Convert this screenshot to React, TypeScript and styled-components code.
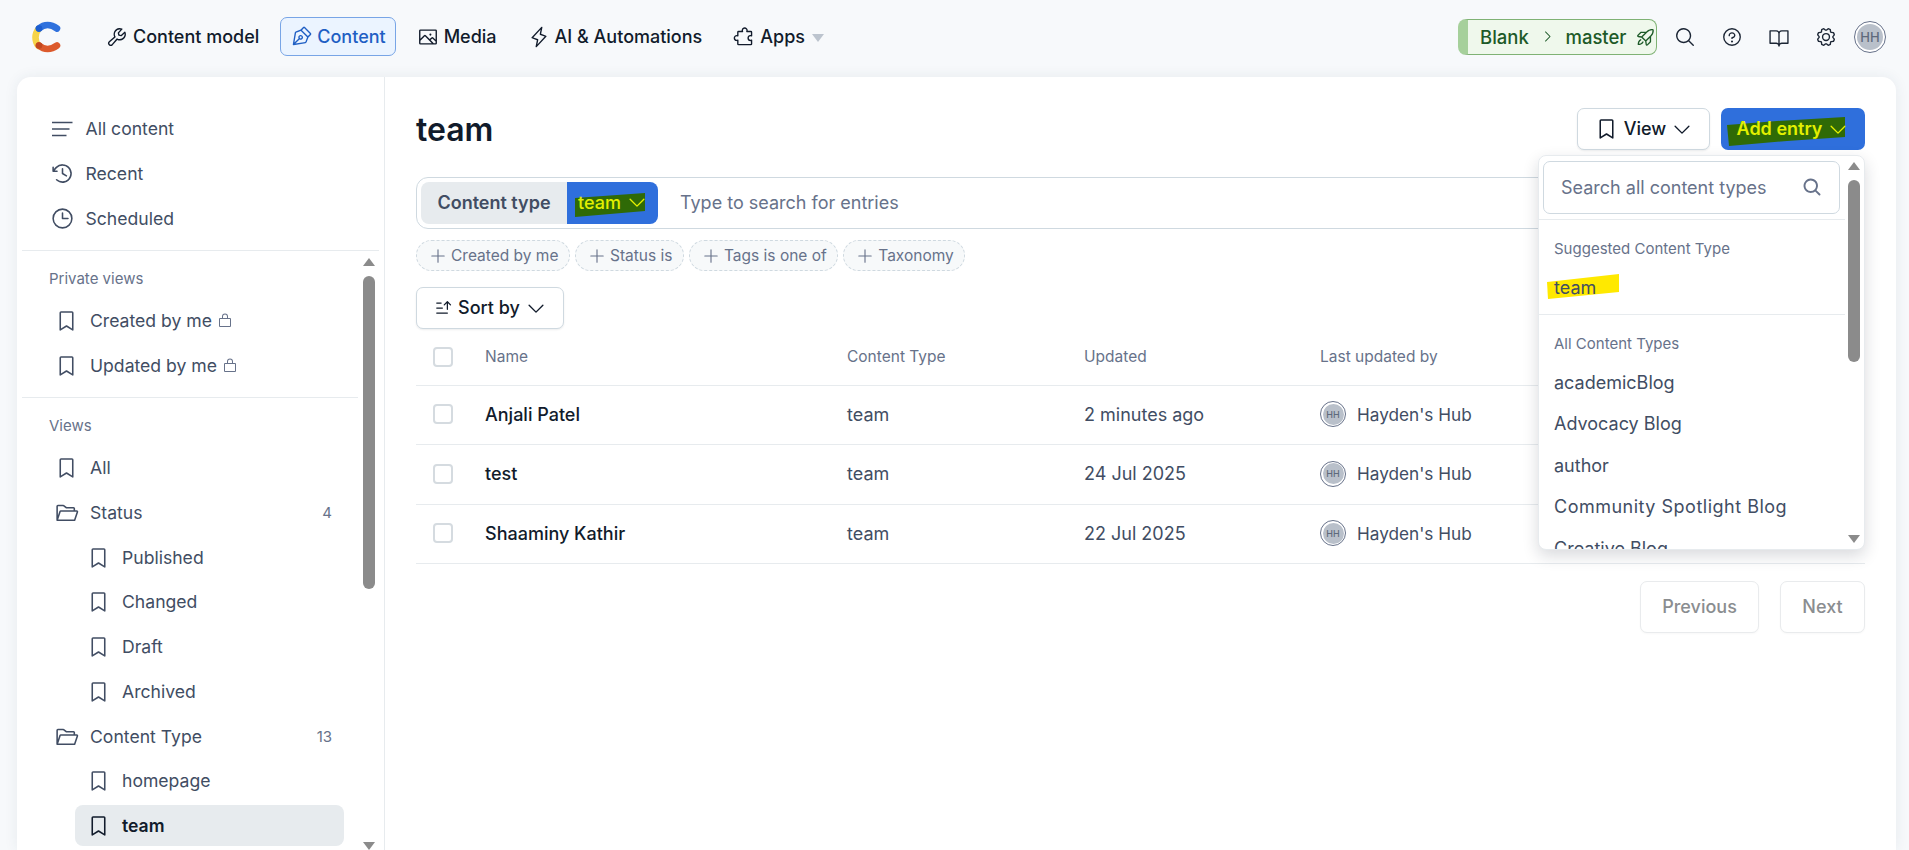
import * as React from 'react';
import styled, { createGlobalStyle } from 'styled-components';
import {
  PiBookmarkSimple, PiBookOpen, PiCaretDown, PiCaretRight, PiClock, PiClockCounterClockwise, PiFolderOpen,
  PiGear, PiImage, PiLightning, PiLockSimple, PiMagnifyingGlass, PiMagnifyingGlassBold, PiPenNib, PiPlus,
  PiPuzzlePiece, PiQuestion, PiRocketLaunch, PiSortDescending, PiWrench,
} from 'react-icons/pi';

const GlobalStyle = createGlobalStyle`
  * { box-sizing: border-box; }
  html, body { margin: 0; height: 100%; overflow: hidden; }
  body {
    font-family: Inter, 'Liberation Sans', sans-serif;
    font-size: 18px;
    color: #111b2b;
    background: #f7f9fb;
  }
  #root { height: 100%; }
`;

const Page = styled.div`
  height: 100%;
  display: flex;
  flex-direction: column;
`;

/* top bar */
const TopBar = styled.header`
  height: 77px;
  flex: none;
  display: flex;
  align-items: center;
  padding: 0 23px 4px 31px;
`;

const Logo = styled.svg`
  width: 32px;
  height: 34px;
  flex: none;
  margin-right: 33px;
`;

const MainNav = styled.nav`
  display: flex;
  align-items: center;
  gap: 11px;
`;

const NavLink = styled.a<{ $active?: boolean }>`
  height: 39px;
  display: flex;
  align-items: center;
  gap: 5px;
  padding: 0 9px;
  border-radius: 7px;
  font-weight: 500;
  white-space: nowrap;
  color: ${p => (p.$active ? '#1f5fc4' : '#111b2b')};
  background: ${p => (p.$active ? '#ebf4ff' : 'transparent')};
  border: 1px solid ${p => (p.$active ? '#78a5e6' : 'transparent')};
`;

const AppsCaret = styled.span`
  width: 0;
  height: 0;
  margin-left: 2px;
  margin-top: 3px;
  border-left: 6px solid transparent;
  border-right: 6px solid transparent;
  border-top: 8px solid #bcc4ce;
`;

const RightGroup = styled.div`
  margin-left: auto;
  display: flex;
  align-items: center;
  gap: 5px;
`;

const EnvPill = styled.div`
  width: 199px;
  height: 36px;
  display: flex;
  align-items: center;
  gap: 11px;
  margin-right: -1px;
  padding-left: 12px;
  border: 1px solid #7fb274;
  border-left: 10px solid #a6d09b;
  border-radius: 8px;
  background: #eff8ec;
  color: #1d5a28;
  font-size: 18.5px;
  font-weight: 500;
`;

const EnvRocket = styled(PiRocketLaunch)`
  margin-left: -3px;
`;

const TopIcons = styled.div`
  display: flex;
`;

const TopIcon = styled.span`
  width: 47px;
  display: flex;
  justify-content: center;
  color: #1c2635;
`;

const Avatar = styled.span<{ $size: number }>`
  width: ${p => p.$size}px;
  height: ${p => p.$size}px;
  flex: none;
  display: flex;
  padding: ${p => (p.$size > 30 ? 2 : 1.5)}px;
  background: #fff;
  border: 1px solid #67728a;
  border-radius: 50%;
`;

const AvatarFace = styled.span<{ $small?: boolean }>`
  flex: 1;
  display: flex;
  align-items: center;
  justify-content: center;
  border-radius: 50%;
  background: #b9c0ca;
  color: #5f6a7c;
  font-size: ${p => (p.$small ? 9 : 13)}px;
  font-weight: 500;
`;

/* panel */
const Panel = styled.div`
  flex: 1;
  min-height: 0;
  margin: 0 13px 0 17px;
  display: flex;
  background: #fff;
  border-radius: 14px 14px 0 0;
  box-shadow: 0 0 14px rgba(40, 60, 90, 0.08);
  overflow: hidden;
`;

const Sidebar = styled.aside`
  width: 368px;
  flex: none;
  display: flex;
  flex-direction: column;
  border-right: 1px solid #e7ebee;
  padding-top: 29.6px;
  font-size: 17.6px;
  color: #414d63;
`;

const SideTop = styled.div`
  padding-bottom: 9px;
  margin: 0 5px;
  border-bottom: 1px solid #e7ebee;
`;

const SideScroll = styled.div`
  position: relative;
  flex: 1;
  min-height: 0;
  overflow: hidden;
`;

const SideSection = styled.section<{ $divider?: boolean }>`
  margin: 0 26px 0 5px;
  padding: 18.5px 0 8.6px;
  border-bottom: ${p => (p.$divider ? '1px solid #e7ebee' : 'none')};
`;

const SideLabel = styled.div`
  height: 20px;
  line-height: 20px;
  margin: 0 0 9.1px 27px;
  font-size: 15px;
  color: #67728a;
`;

const SideItem = styled.a<{ $level: 0 | 1 | 2; $active?: boolean }>`
  height: 44.75px;
  display: flex;
  align-items: center;
  gap: 11px;
  padding: 0 12px 0 11px;
  margin-left: ${p => [16.5, 21, 53][p.$level]}px;
  margin-right: 14px;
  position: relative;
  isolation: isolate;
  font-weight: ${p => (p.$active ? 600 : 400)};
  color: ${p => (p.$active ? '#111b2b' : '#414d63')};
  &::before {
    content: '';
    display: ${p => (p.$active ? 'block' : 'none')};
    position: absolute;
    z-index: -1;
    inset: 1.5px 0;
    border-radius: 8px;
    background: #e7ebee;
  }
`;

const SideIcon = styled.span`
  width: 25px;
  flex: none;
  display: flex;
  justify-content: center;
`;

const LinesIcon = styled.svg`
  width: 21px;
  height: 16px;
`;

const LockIcon = styled(PiLockSimple)`
  margin-left: -6px;
  color: #67728a;
`;

const Count = styled.span`
  margin-left: auto;
  font-size: 15px;
  color: #67728a;
`;

/* scrollbars drawn over the lists */
const ScrollTrack = styled.div<{ $top: number; $right: number; $bottom: number }>`
  position: absolute;
  top: ${p => p.$top}px;
  right: ${p => p.$right}px;
  bottom: ${p => p.$bottom}px;
  width: 12px;
  display: flex;
  flex-direction: column;
`;

const ArrowUp = styled.span`
  width: 0;
  height: 0;
  flex: none;
  border-left: 6px solid transparent;
  border-right: 6px solid transparent;
  border-bottom: 8px solid #8b8b8b;
`;

const ArrowDown = styled(ArrowUp)`
  margin-top: auto;
  border-bottom: none;
  border-top: 8px solid #8b8b8b;
`;

const Thumb = styled.span<{ $height: number }>`
  height: ${p => p.$height}px;
  flex: none;
  margin-top: 10px;
  border-radius: 6px;
  background: #8b8b8b;
`;

/* main column */
const Main = styled.main`
  position: relative;
  flex: 1;
  min-width: 0;
  display: flex;
  flex-direction: column;
  padding: 31px 31px 0 31px;
`;

const TitleRow = styled.div`
  display: flex;
  align-items: center;
  height: 42px;
`;

const Title = styled.h1`
  margin: 0;
  font-size: 32px;
  font-weight: 600;
  color: #111b2b;
`;

const TitleActions = styled.div`
  margin-left: auto;
  display: flex;
  gap: 11px;
`;

const OutlineButton = styled.button<{ $width: number }>`
  width: ${p => p.$width}px;
  height: 42px;
  display: flex;
  align-items: center;
  justify-content: center;
  gap: 5px;
  padding: 0 0 1px;
  font: inherit;
  font-weight: 500;
  color: #111b2b;
  background: #fff;
  border: 1px solid #cfd9e0;
  border-radius: 7px;
  box-shadow: 0 1px 2px rgba(17, 27, 43, 0.08);
`;

const AddButton = styled.button`
  position: relative;
  width: 144px;
  height: 42px;
  display: flex;
  align-items: center;
  justify-content: center;
  padding: 0 0 1px;
  font: inherit;
  font-weight: 600;
  color: #e3f000;
  background: #2f6fdc;
  border: none;
  border-radius: 7px;
`;

const Marker = styled.svg<{ $x: number; $y: number; $w: number; $h: number }>`
  position: absolute;
  left: ${p => p.$x}px;
  top: ${p => p.$y}px;
  width: ${p => p.$w}px;
  height: ${p => p.$h}px;
`;

const OverMarker = styled.span`
  position: relative;
  display: flex;
  align-items: center;
  gap: 5px;
`;

const SearchBar = styled.div`
  margin-top: 27px;
  height: 52px;
  flex: none;
  display: flex;
  align-items: center;
  padding: 0 4px;
  border: 1px solid #cfd9e0;
  border-radius: 12px;
`;

const FilterName = styled.span`
  height: 42px;
  width: 146px;
  display: flex;
  align-items: center;
  justify-content: center;
  padding-bottom: 1.5px;
  font-weight: 600;
  color: #414d63;
  background: #e7ebee;
  border-radius: 8px 0 0 8px;
`;

const FilterValue = styled.span`
  position: relative;
  height: 42px;
  width: 91px;
  display: flex;
  align-items: center;
  padding: 0 0 1.5px 11px;
  font-weight: 500;
  color: #e3f000;
  background: #2f6fdc;
  border-radius: 0 8px 8px 0;
`;

const SearchHint = styled.span`
  margin-left: 22px;
  padding-bottom: 1.5px;
  color: #67728a;
`;

const PillRow = styled.div`
  margin-top: 11px;
  display: flex;
  gap: 5px;
`;

const Pill = styled.span`
  height: 31px;
  display: flex;
  align-items: center;
  gap: 4px;
  padding: 0 10.5px 0 12px;
  font-size: 15.5px;
  color: #67728a;
  background: #f7f9fa;
  border: 1px dashed #cfd9e0;
  border-radius: 16px;
`;

const SortRow = styled.div`
  margin-top: 16px;
  display: flex;
`;

const TableRow = styled.div<{ $head?: boolean }>`
  height: ${p => (p.$head ? 56.5 : 59.6)}px;
  flex: none;
  display: grid;
  grid-template-columns: 69px 362px 237px 236px 1fr;
  align-items: center;
  padding-bottom: ${p => (p.$head ? 0 : 1)}px;
  border-bottom: 1px solid #e7ebee;
  font-size: ${p => (p.$head ? 15.5 : 18)}px;
  color: ${p => (p.$head ? '#67728a' : '#414d63')};
`;

const Check = styled.span`
  width: 20px;
  height: 20px;
  margin-left: 17px;
  border: 2px solid #d5dbe0;
  border-radius: 4px;
  background: #fff;
`;

const EntryName = styled.span`
  font-weight: 500;
  color: #111b2b;
`;

const Person = styled.span`
  display: flex;
  align-items: center;
  gap: 11px;
  font-size: 17.2px;
`;

const Pager = styled.div`
  margin-top: 17px;
  display: flex;
  justify-content: flex-end;
  gap: 21px;
`;

const PagerButton = styled.button<{ $width: number }>`
  width: ${p => p.$width}px;
  height: 52px;
  padding: 0 0 1px;
  font: inherit;
  font-weight: 500;
  color: #8a8d90;
  background: #fff;
  border: 1px solid #e9ebed;
  border-radius: 7px;
  box-shadow: 0 1px 2px rgba(17, 27, 43, 0.03);
`;

/* add entry menu */
const Menu = styled.div`
  position: absolute;
  top: 78px;
  right: 31px;
  width: 327px;
  height: 395px;
  overflow: hidden;
  background: #fff;
  border: 1px solid #e7ebee;
  border-radius: 8px;
  box-shadow: 0 6px 16px rgba(17, 27, 43, 0.16);
`;

const MenuSearch = styled.div`
  height: 53px;
  width: 297px;
  margin: 5px 0 0 4px;
  display: flex;
  align-items: center;
  justify-content: space-between;
  padding: 0 17px 1px;
  color: #67728a;
  border: 1px solid #cfd9e0;
  border-radius: 7px;
`;

const MenuDivider = styled.div`
  width: 306px;
  height: 1px;
  margin-top: 5px;
  background: #e7ebee;
`;

const MenuLabel = styled.div`
  margin: 0 0 8px 15px;
  height: 20px;
  line-height: 20px;
  font-size: 15px;
  color: #67728a;
`;

const MenuGroup = styled.div`
  padding-top: 19px;
`;

const MenuItem = styled.div<{ $tracking?: number }>`
  position: relative;
  height: 41.5px;
  display: flex;
  align-items: center;
  padding-left: 15px;
  color: #414d63;
  white-space: nowrap;
  letter-spacing: ${p => p.$tracking ?? 0}px;
`;

const LogoMark = () => (
  <Logo viewBox="0 0 32 34" aria-hidden>
    <g fill="none" strokeWidth="6.6" strokeLinecap="round">
      <path d="M7.5 9C3.5 14 3.5 21 7.5 26" stroke="#f6d448" />
      <path d="M8 8.5C13 4 20 4 26 8.5" stroke="#2f71dd" />
      <path d="M8 25.5C13 30 20 30 26 25.5" stroke="#dc5a2c" />
    </g>
    <circle cx="8" cy="8.5" r="3.3" fill="#1c5ed0" />
    <circle cx="8" cy="25.5" r="3.3" fill="#c2481f" />
  </Logo>
);

const Bookmark = () => <SideIcon><PiBookmarkSimple size={25} /></SideIcon>;
const Folder = () => <SideIcon><PiFolderOpen size={25} /></SideIcon>;

const rows = [
  { name: 'Anjali Patel', updated: '2 minutes ago' },
  { name: 'test', updated: '24 Jul 2025' },
  { name: 'Shaaminy Kathir', updated: '22 Jul 2025' },
];

const contentTypes = [
  { name: 'academicBlog' },
  { name: 'Advocacy Blog' },
  { name: 'author' },
  { name: 'Community Spotlight Blog', tracking: 0.5 },
  { name: 'Creative Blog' },
];

export default function App() {
  return (
    <Page>
      <GlobalStyle />
      <TopBar>
        <LogoMark />
        <MainNav>
          <NavLink><PiWrench size={22} />Content model</NavLink>
          <NavLink $active><PiPenNib size={22} />Content</NavLink>
          <NavLink><PiImage size={22} />Media</NavLink>
          <NavLink><PiLightning size={22} />AI &amp; Automations</NavLink>
          <NavLink><PiPuzzlePiece size={22} />Apps<AppsCaret /></NavLink>
        </MainNav>
        <RightGroup>
          <EnvPill>
            <span>Blank</span>
            <PiCaretRight size={15} />
            <span>master</span>
            <EnvRocket size={22} />
          </EnvPill>
          <TopIcons>
            <TopIcon><PiMagnifyingGlass size={22} /></TopIcon>
            <TopIcon><PiQuestion size={22} /></TopIcon>
            <TopIcon><PiBookOpen size={22} /></TopIcon>
            <TopIcon><PiGear size={22} /></TopIcon>
          </TopIcons>
          <Avatar $size={32}><AvatarFace>HH</AvatarFace></Avatar>
        </RightGroup>
      </TopBar>

      <Panel>
        <Sidebar>
          <SideTop>
            <SideItem $level={0}>
              <SideIcon>
                <LinesIcon viewBox="0 0 21 16" aria-hidden>
                  <path d="M0 1.5H20.5M0 8H17.5M0 14.5H14.5" fill="none" stroke="currentColor" strokeWidth="1.6" />
                </LinesIcon>
              </SideIcon>
              All content
            </SideItem>
            <SideItem $level={0}><SideIcon><PiClockCounterClockwise size={25} /></SideIcon>Recent</SideItem>
            <SideItem $level={0}><SideIcon><PiClock size={25} /></SideIcon>Scheduled</SideItem>
          </SideTop>
          <SideScroll>
            <SideSection $divider>
              <SideLabel>Private views</SideLabel>
              <SideItem $level={1}><Bookmark />Created by me<LockIcon size={16} /></SideItem>
              <SideItem $level={1}><Bookmark />Updated by me<LockIcon size={16} /></SideItem>
            </SideSection>
            <SideSection>
              <SideLabel>Views</SideLabel>
              <SideItem $level={1}><Bookmark />All</SideItem>
              <SideItem $level={1}><Folder />Status<Count>4</Count></SideItem>
              <SideItem $level={2}><Bookmark />Published</SideItem>
              <SideItem $level={2}><Bookmark />Changed</SideItem>
              <SideItem $level={2}><Bookmark />Draft</SideItem>
              <SideItem $level={2}><Bookmark />Archived</SideItem>
              <SideItem $level={1}><Folder />Content Type<Count>13</Count></SideItem>
              <SideItem $level={2}><Bookmark />homepage</SideItem>
              <SideItem $level={2} $active><Bookmark />team</SideItem>
            </SideSection>
            <ScrollTrack $top={7} $right={9} $bottom={0}>
              <ArrowUp />
              <Thumb $height={313} />
              <ArrowDown />
            </ScrollTrack>
          </SideScroll>
        </Sidebar>

        <Main>
          <TitleRow>
            <Title>team</Title>
            <TitleActions>
              <OutlineButton $width={133}>
                <PiBookmarkSimple size={25} />View<PiCaretDown size={22} />
              </OutlineButton>
              <AddButton>
                <Marker $x={6} $y={9} $w={118} $h={29} viewBox="0 0 118 29" preserveAspectRatio="none" aria-hidden>
                  <polygon points="0,8 50,4 118,0 118,20 60,24 2,29" fill="#2f6a06" />
                </Marker>
                <OverMarker>Add entry<PiCaretDown size={22} /></OverMarker>
              </AddButton>
            </TitleActions>
          </TitleRow>

          <SearchBar>
            <FilterName>Content type</FilterName>
            <FilterValue>
              <Marker $x={8} $y={11} $w={70} $h={24} viewBox="0 0 70 24" preserveAspectRatio="none" aria-hidden>
                <polygon points="0,5 70,0 70,18 0,24" fill="#2f6a06" />
              </Marker>
              <OverMarker>team<PiCaretDown size={22} /></OverMarker>
            </FilterValue>
            <SearchHint>Type to search for entries</SearchHint>
          </SearchBar>

          <PillRow>
            <Pill><PiPlus size={18} />Created by me</Pill>
            <Pill><PiPlus size={18} />Status is</Pill>
            <Pill><PiPlus size={18} />Tags is one of</Pill>
            <Pill><PiPlus size={18} />Taxonomy</Pill>
          </PillRow>

          <SortRow>
            <OutlineButton $width={148}>
              <PiSortDescending size={20} />Sort by<PiCaretDown size={22} />
            </OutlineButton>
          </SortRow>

          <TableRow $head>
            <Check />
            <span>Name</span>
            <span>Content Type</span>
            <span>Updated</span>
            <span>Last updated by</span>
          </TableRow>
          {rows.map(row => (
            <TableRow key={row.name}>
              <Check />
              <EntryName>{row.name}</EntryName>
              <span>team</span>
              <span>{row.updated}</span>
              <Person>
                <Avatar $size={26}><AvatarFace $small>HH</AvatarFace></Avatar>
                Hayden's Hub
              </Person>
            </TableRow>
          ))}

          <Pager>
            <PagerButton $width={119}>Previous</PagerButton>
            <PagerButton $width={85}>Next</PagerButton>
          </Pager>

          <Menu>
            <MenuSearch>
              Search all content types
              <PiMagnifyingGlassBold size={20} />
            </MenuSearch>
            <MenuDivider />
            <MenuGroup>
              <MenuLabel>Suggested Content Type</MenuLabel>
              <MenuItem>
                <Marker $x={8} $y={7} $w={72} $h={25} viewBox="0 0 72 25" preserveAspectRatio="none" aria-hidden>
                  <polygon points="0,8 72,0 72,18 1,25" fill="#ffe900" />
                </Marker>
                <OverMarker>team</OverMarker>
              </MenuItem>
            </MenuGroup>
            <MenuDivider />
            <MenuGroup>
              <MenuLabel>All Content Types</MenuLabel>
              {contentTypes.map(t => <MenuItem key={t.name} $tracking={t.tracking}>{t.name}</MenuItem>)}
            </MenuGroup>
            <ScrollTrack $top={6} $right={4} $bottom={6}>
              <ArrowUp />
              <Thumb $height={182} />
              <ArrowDown />
            </ScrollTrack>
          </Menu>
        </Main>
      </Panel>
    </Page>
  );
}
